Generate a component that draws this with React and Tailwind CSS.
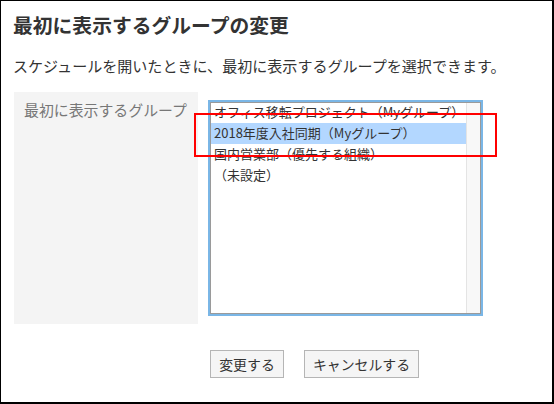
export default function App() {
  const rows = [
    "オフィス移転プロジェクト（Myグループ）",
    "2018年度入社同期（Myグループ）",
    "国内営業部（優先する組織）",
    "（未設定）",
  ];
  return (
    <div className="relative w-[554px] h-[404px] bg-white border-black border-l border-t border-r-2 border-b-2 text-[#333] font-['Noto_Sans_CJK_JP','Noto_Sans',sans-serif] overflow-hidden">
      <div className="pl-[13px] pt-[10px]">
        <h1 className="ml-[-1px] text-[19.8px] leading-[28px] font-bold text-[#333]">
          最初に表示するグループの変更
        </h1>
        <p className="ml-[-1px] mt-[16px] text-[15.05px] leading-[22px] text-[#333] whitespace-nowrap">
          スケジュールを開いたときに、最初に表示するグループを選択できます。
        </p>
        <div className="mt-[15px] flex">
          <div className="w-[184px] h-[232px] bg-[#f4f4f4] pl-[10px] pt-[7px]">
            <div className="text-[14.9px] leading-[22px] text-[#777] whitespace-nowrap">
              最初に表示するグループ
            </div>
          </div>
          <div className="ml-[10px] mt-[8px] w-[275px] h-[216px] border-2 border-[#7ab6e6]">
            <div className="w-full h-full border border-[#9a9a9a] flex bg-white overflow-hidden">
              <div className="flex-1 -mt-[1px]">
                {rows.map((r, i) => (
                  <div
                    key={i}
                    className={
                      "h-[21px] pl-[3px] text-[13px] leading-[20px] whitespace-nowrap text-[#333] " +
                      (i === 1 ? "bg-[#b3d7ff]" : "")
                    }
                  >
                    {r}
                  </div>
                ))}
              </div>
              <div className="w-[14px] h-full bg-[#f8f8f8] border-l border-[#e4e4e4]" />
            </div>
          </div>
        </div>
        <div className="mt-[26px] pl-[196px] flex gap-[20px]">
          <button className="w-[74px] h-[28px] border border-[#b5b5b5] bg-[#f5f5f5] text-[13.9px] leading-[26px] text-[#333] whitespace-nowrap">
            変更する
          </button>
          <button className="w-[115px] h-[28px] border border-[#b5b5b5] bg-[#f5f5f5] text-[13.9px] leading-[26px] text-[#333] whitespace-nowrap">
            キャンセルする
          </button>
        </div>
      </div>
      <div className="absolute left-[193px] top-[112px] w-[303px] h-[44px] border-2 border-[#ff0000] pointer-events-none" />
    </div>
  );
}
